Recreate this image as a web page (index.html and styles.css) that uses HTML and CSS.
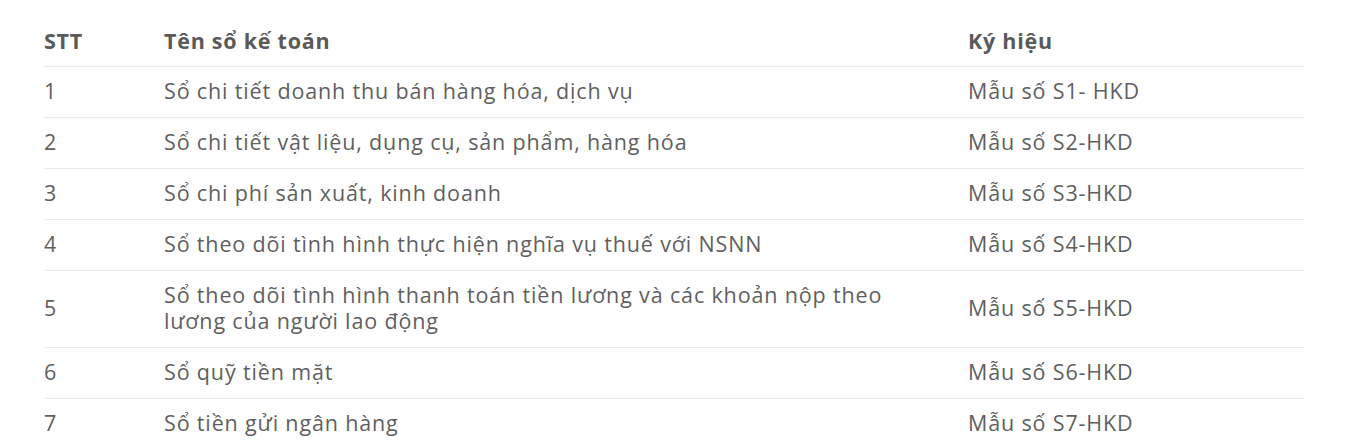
FILE: index.html
```html
<!DOCTYPE html>
<html lang="vi">
<head>
<meta charset="utf-8">
<link rel="stylesheet" href="styles.css">
</head>
<body>
<div class="wrap">
<table class="books">
  <colgroup>
    <col class="c-stt">
    <col class="c-name">
    <col class="c-code">
  </colgroup>
  <thead>
    <tr><th>STT</th><th>Tên sổ kế toán</th><th>Ký hiệu</th></tr>
  </thead>
  <tbody>
    <tr><td>1</td><td>Sổ chi tiết doanh thu bán hàng hóa, dịch vụ</td><td>Mẫu số S1- HKD</td></tr>
    <tr><td>2</td><td>Sổ chi tiết vật liệu, dụng cụ, sản phẩm, hàng hóa</td><td>Mẫu số S2-HKD</td></tr>
    <tr><td>3</td><td>Sổ chi phí sản xuất, kinh doanh</td><td>Mẫu số S3-HKD</td></tr>
    <tr><td>4</td><td>Sổ theo dõi tình hình thực hiện nghĩa vụ thuế với NSNN</td><td>Mẫu số S4-HKD</td></tr>
    <tr><td>5</td><td>Sổ theo dõi tình hình thanh toán tiền lương và các khoản nộp theo lương của người lao động</td><td>Mẫu số S5-HKD</td></tr>
    <tr><td>6</td><td>Sổ quỹ tiền mặt</td><td>Mẫu số S6-HKD</td></tr>
    <tr><td>7</td><td>Sổ tiền gửi ngân hàng</td><td>Mẫu số S7-HKD</td></tr>
  </tbody>
</table>
</div>
</body>
</html>
```

FILE: styles.css
```css
html, body {
  margin: 0;
  padding: 0;
  background: #ffffff;
}
.wrap {
  padding: 16px 42px 0 44px;
}
.books {
  width: 1260px;
  border-collapse: collapse;
  font-family: "Open Sans", "Liberation Sans", sans-serif;
  font-size: 21.5px;
  letter-spacing: 0.85px;
  color: #5f5f5f;
}
.c-stt { width: 120px; }
.c-name { width: 804px; }
.c-code { width: 336px; }
.books th,
.books td {
  text-align: left;
  vertical-align: middle;
  padding: 11px 40px 13px 0;
  line-height: 26px;
}
.books th {
  font-weight: 700;
  color: #5a5a5a;
  letter-spacing: 0.75px;
  padding-top: 12px;
  padding-bottom: 12px;
}
.books tr {
  border-bottom: 1px solid #e9e9e9;
}
.books tbody tr:last-child {
  border-bottom: none;
}
```
